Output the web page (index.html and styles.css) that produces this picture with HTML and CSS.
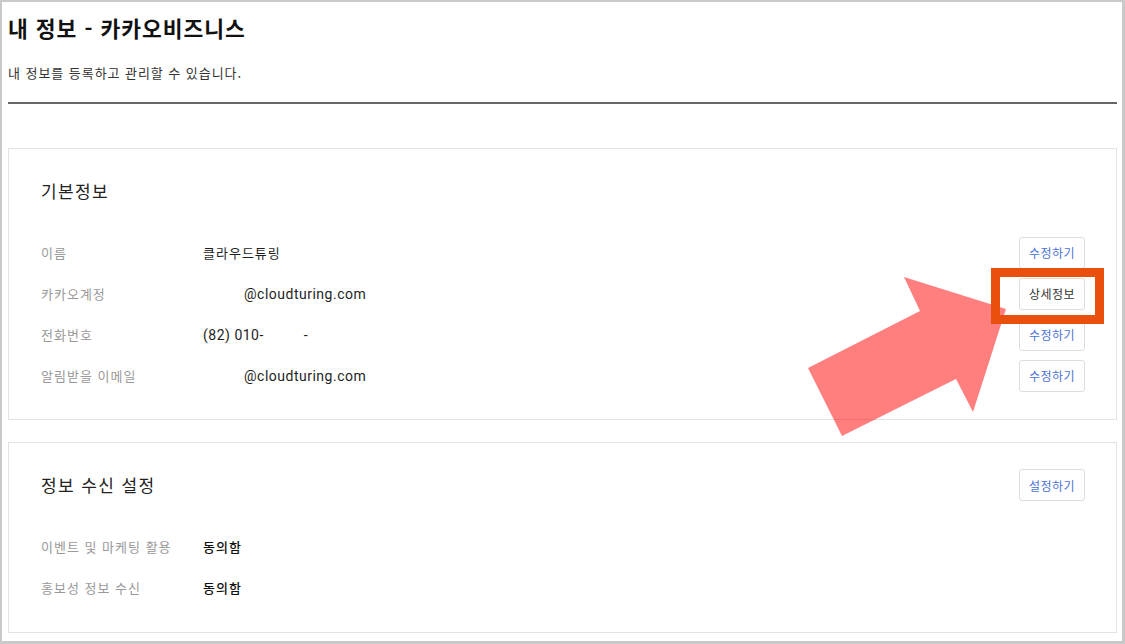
FILE: index.html
```html
<!DOCTYPE html>
<html lang="ko">
<head>
<meta charset="utf-8">
<title>내 정보 - 카카오비즈니스</title>
<link rel="stylesheet" href="styles.css">
</head>
<body>
<div class="frame">
  <header class="page-head">
    <h1 class="page-title">내 정보 - 카카오비즈니스</h1>
    <p class="page-desc">내 정보를 등록하고 관리할 수 있습니다.</p>
  </header>

  <section class="card">
    <div class="card-head">
      <h2 class="card-title">기본정보</h2>
    </div>
    <div class="rows">
      <div class="row">
        <span class="label">이름</span>
        <span class="value value-ko">클라우드튜링</span>
        <button class="btn btn-blue">수정하기</button>
      </div>
      <div class="row">
        <span class="label">카카오계정</span>
        <span class="value"><span class="blank blank-id"></span>@cloudturing.com</span>
        <button class="btn btn-dark">상세정보</button>
      </div>
      <div class="row">
        <span class="label">전화번호</span>
        <span class="value">(82) 010-<span class="blank blank-mid"></span>-</span>
        <button class="btn btn-blue">수정하기</button>
      </div>
      <div class="row">
        <span class="label">알림받을 이메일</span>
        <span class="value"><span class="blank blank-id"></span>@cloudturing.com</span>
        <button class="btn btn-blue">수정하기</button>
      </div>
    </div>
  </section>

  <section class="card card-last">
    <div class="card-head">
      <h2 class="card-title">정보 수신 설정</h2>
      <button class="btn btn-blue">설정하기</button>
    </div>
    <div class="rows">
      <div class="row">
        <span class="label">이벤트 및 마케팅 활용</span>
        <span class="value value-ko value-strong">동의함</span>
      </div>
      <div class="row">
        <span class="label">홍보성 정보 수신</span>
        <span class="value value-ko value-strong">동의함</span>
      </div>
    </div>
  </section>
</div>

<svg class="arrow" width="1125" height="644" viewBox="0 0 1125 644" aria-hidden="true">
  <polygon points="808,368 920,311 904,277 1006,309 973,412 956,379 842,436" fill="rgba(255,0,0,0.5)"/>
</svg>
<div class="highlight"></div>
</body>
</html>
```

FILE: styles.css
```css
html, body {
  margin: 0;
  padding: 0;
  background: #ffffff;
}

body {
  position: relative;
  width: 1125px;
  height: 644px;
  overflow: hidden;
  font-family: "Roboto", "Noto Sans CJK KR", sans-serif;
  color: #222222;
}

.frame {
  box-sizing: border-box;
  width: 1125px;
  height: 644px;
  border-style: solid;
  border-color: #c9c9c9;
  border-width: 2px 3px 3px 2px;
  padding: 0 5px 0 6px;
  display: flex;
  flex-direction: column;
}

.page-head {
  border-bottom: 2px solid #666666;
  padding-top: 11px;
  padding-bottom: 19px;
}

.page-title {
  margin: 0;
  font-family: "Noto Sans CJK KR", sans-serif;
  font-size: 21.5px;
  line-height: 30px;
  font-weight: 700;
  color: #111111;
  letter-spacing: 1px;
}

.page-desc {
  margin: 20px 0 0;
  font-family: "Noto Sans CJK KR", sans-serif;
  font-size: 13px;
  line-height: 20px;
  color: #333333;
  letter-spacing: 0.95px;
}

.card {
  border: 1px solid #e2e2e2;
  padding: 26px 31px 23px 32px;
  margin-top: 44px;
}

.card + .card {
  margin-top: 22px;
}

.card-last {
  padding-bottom: 24px;
}

.card-head {
  display: flex;
  align-items: center;
  justify-content: space-between;
  min-height: 32px;
  margin-bottom: 25px;
}

.card-title {
  margin: 0;
  font-family: "Noto Sans CJK KR", sans-serif;
  font-size: 17px;
  line-height: 24px;
  font-weight: 400;
  color: #222222;
  letter-spacing: 1.4px;
}

.row {
  display: flex;
  align-items: center;
  height: 41px;
}

.label {
  width: 162px;
  flex: none;
  font-family: "Noto Sans CJK KR", sans-serif;
  font-size: 13px;
  color: #999999;
  letter-spacing: 1px;
}

.value {
  flex: 1;
  font-size: 14px;
  letter-spacing: 0.5px;
  color: #1e1e1e;
}

.value-ko {
  font-family: "Noto Sans CJK KR", sans-serif;
  font-size: 13px;
  letter-spacing: 1px;
}

.value-strong {
  font-weight: 500;
  color: #111111;
}

.blank {
  display: inline-block;
}

.blank-id {
  width: 41px;
}

.blank-mid {
  width: 40px;
}

.btn {
  box-sizing: border-box;
  width: 66px;
  height: 32px;
  padding: 0;
  background: #ffffff;
  border: 1px solid #dddddd;
  border-radius: 3px;
  font-family: "Noto Sans CJK KR", sans-serif;
  font-size: 12px;
  letter-spacing: 0.5px;
  flex: none;
}

.btn-blue {
  color: #4a72d8;
}

.btn-dark {
  color: #333333;
}

.arrow {
  position: absolute;
  left: 0;
  top: 0;
}

.highlight {
  position: absolute;
  left: 991px;
  top: 268px;
  width: 113px;
  height: 56px;
  box-sizing: border-box;
  border: 9px solid #e9500e;
}
```
